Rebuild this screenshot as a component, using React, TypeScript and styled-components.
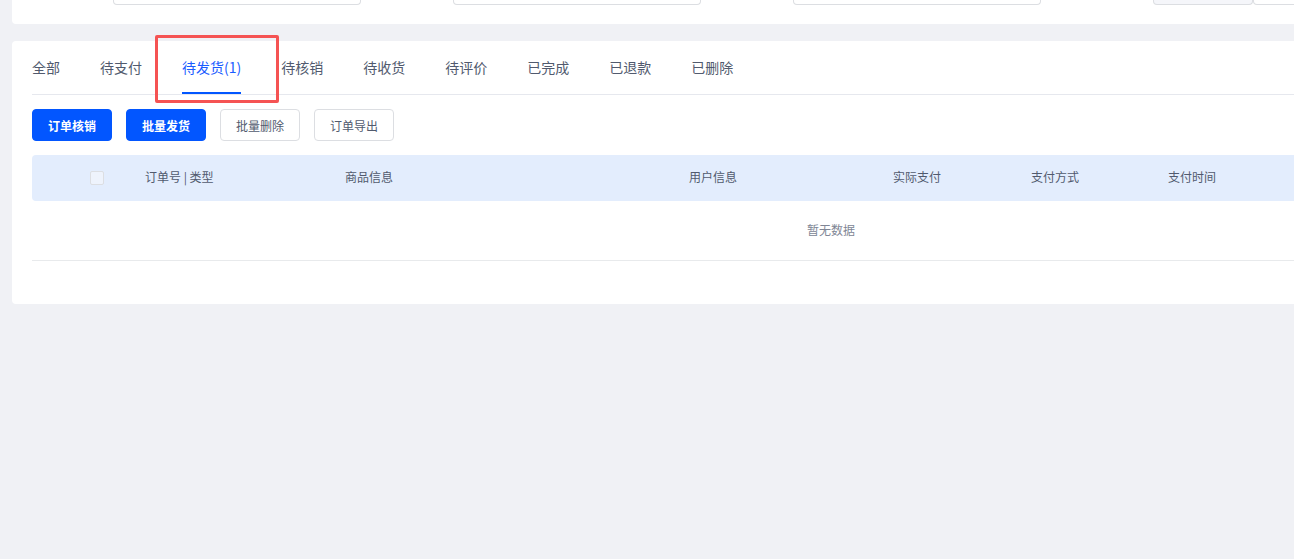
import styled, { createGlobalStyle } from "styled-components";

const GlobalStyle = createGlobalStyle`
    html, body {
        margin: 0;
        padding: 0;
        background: #f0f1f5;
        overflow: hidden;
    }
    body {
        font-family: "Noto Sans CJK SC", "Noto Sans", sans-serif;
    }
`;

const Page = styled.div`
    padding-left: 12px;
    width: 1700px;
`;

const FilterCard = styled.div`
    width: 1638px;
    height: 24px;
    background: #fff;
    border-radius: 0 0 4px 4px;
    display: flex;
    align-items: flex-start;
`;

const FilterInput = styled.div<{ $width: number; $left: number; $muted?: boolean }>`
    width: ${(p) => p.$width}px;
    margin-left: ${(p) => p.$left}px;
    height: 5px;
    box-sizing: border-box;
    border: 1px solid #dcdee2;
    border-top: none;
    border-radius: 0 0 4px 4px;
    background: ${(p) => (p.$muted ? "#f5f6fa" : "#fff")};
`;

const OrderCard = styled.div`
    position: relative;
    width: 1638px;
    margin-top: 17px;
    padding: 0 20px 43px;
    box-sizing: border-box;
    background: #fff;
    border-radius: 4px;
`;

const Annotation = styled.div`
    position: absolute;
    left: 143px;
    top: -6px;
    width: 124px;
    height: 68px;
    box-sizing: border-box;
    border: 3px solid #f55353;
    border-radius: 2px;
    pointer-events: none;
`;

const Tabs = styled.div`
    display: flex;
    border-bottom: 1px solid #e6e8ee;
`;

const Tab = styled.div<{ $active?: boolean }>`
    position: relative;
    height: 53px;
    padding-bottom: 2px;
    box-sizing: border-box;
    margin-right: 40px;
    display: flex;
    align-items: center;
    font-size: 14px;
    color: ${(p) => (p.$active ? "#1a5cff" : "#515a6e")};
    &::after {
        content: "";
        display: ${(p) => (p.$active ? "block" : "none")};
        position: absolute;
        left: 0;
        right: 0;
        bottom: 0;
        height: 2px;
        background: #0256ff;
    }
`;

const Toolbar = styled.div`
    display: flex;
    gap: 14px;
    margin: 14px 0;
`;

const Button = styled.button<{ $primary?: boolean }>`
    width: 80px;
    height: 32px;
    border-radius: 4px;
    font-family: inherit;
    font-size: 12px;
    font-weight: ${(p) => (p.$primary ? 600 : 400)};
    cursor: pointer;
    border: 1px solid ${(p) => (p.$primary ? "#0256ff" : "#dcdee2")};
    background: ${(p) => (p.$primary ? "#0256ff" : "#fff")};
    color: ${(p) => (p.$primary ? "#fff" : "#515a6e")};
`;

const cols = "113px 200px 344px 204px 138px 137px 1fr";

const HeadRow = styled.div`
    display: grid;
    grid-template-columns: ${cols};
    align-items: center;
    height: 46px;
    padding-bottom: 3px;
    box-sizing: border-box;
    background: #e3edfd;
    border-radius: 4px;
    font-size: 12px;
    color: #515a6e;
`;

const Checkbox = styled.span`
    display: block;
    width: 14px;
    height: 14px;
    margin: 3px 0 0 58px;
    box-sizing: border-box;
    border: 1px solid #dcdee2;
    border-radius: 2px;
    background: #eef3fc;
`;

const Empty = styled.div`
    height: 60px;
    padding-bottom: 2px;
    box-sizing: border-box;
    display: flex;
    align-items: center;
    justify-content: center;
    border-bottom: 1px solid #e8eaec;
    font-size: 12px;
    color: #808695;
`;

const tabs = ["全部", "待支付", "待发货(1)", "待核销", "待收货", "待评价", "已完成", "已退款", "已删除"];
const headers = ["订单号 | 类型", "商品信息", "用户信息", "实际支付", "支付方式", "支付时间"];

export default function App() {
    return (
        <Page>
            <GlobalStyle />
            <FilterCard>
                <FilterInput $width={248} $left={101} />
                <FilterInput $width={248} $left={92} />
                <FilterInput $width={248} $left={92} />
                <FilterInput $width={100} $left={112} $muted />
                <FilterInput $width={100} $left={0} />
            </FilterCard>
            <OrderCard>
                <Tabs>
                    {tabs.map((t) => (
                        <Tab key={t} $active={t === "待发货(1)"}>
                            {t}
                        </Tab>
                    ))}
                </Tabs>
                <Toolbar>
                    <Button $primary>订单核销</Button>
                    <Button $primary>批量发货</Button>
                    <Button>批量删除</Button>
                    <Button>订单导出</Button>
                </Toolbar>
                <HeadRow>
                    <Checkbox />
                    {headers.map((h) => (
                        <span key={h}>{h}</span>
                    ))}
                </HeadRow>
                <Empty>暂无数据</Empty>
                <Annotation />
            </OrderCard>
        </Page>
    );
}
